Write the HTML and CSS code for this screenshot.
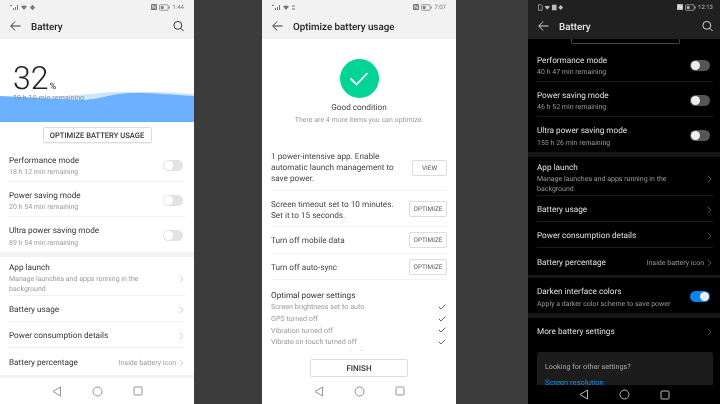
FILE: index.html
```html
<!DOCTYPE html>
<html lang="en">
<head>
    <meta charset="UTF-8">
    <title>Battery screens</title>
    <link rel="stylesheet" href="styles.css">
</head>
<body>
    <svg width="0" height="0" class="defs">
        <symbol id="back" viewBox="0 0 12 12"><path d="M11.500 6H1M5.500 1.200 .8 6l4.700 4.800" fill="none" stroke="currentColor" stroke-width="1"/></symbol>
        <symbol id="search" viewBox="0 0 12 12"><circle cx="5.300" cy="5.300" r="4.300" fill="none" stroke="currentColor" stroke-width="1"/><path d="M8.500 8.500 11.500 11.500" stroke="currentColor" stroke-width="1"/></symbol>
        <symbol id="chev" viewBox="0 0 5 8"><path d="M.7 .7 4 4 .7 7.300" fill="none" stroke="currentColor" stroke-width=".8"/></symbol>
        <symbol id="tick" viewBox="0 0 9 7"><path d="M.7 3.200 3.300 5.800 8.300 .8" fill="none" stroke="currentColor" stroke-width="1"/></symbol>
        <symbol id="nav-back" viewBox="0 0 10 11"><path d="M8.500 1v9L1 5.500z" fill="none" stroke="currentColor" stroke-width=".9"/></symbol>
        <symbol id="nav-home" viewBox="0 0 11 11"><circle cx="5.500" cy="5.500" r="4.500" fill="none" stroke="currentColor" stroke-width=".9"/></symbol>
        <symbol id="nav-recent" viewBox="0 0 10 10"><rect x="1" y="1" width="8" height="8" rx="1" fill="none" stroke="currentColor" stroke-width=".9"/></symbol>
        <symbol id="stat-a" viewBox="0 0 26 7"><path d="M0 1h2v1H0zM3 6h1V4H3zM5 6h1V3H5zM7 6h1V1H7z" fill="currentColor"/><path d="M11 2.500q3-2 6 0L14 6z" fill="currentColor"/><path d="M22.500 .8 25 3.500 22.500 6.200 20 3.500z" fill="currentColor"/></symbol>
        <symbol id="stat-b" viewBox="0 0 26 7"><path d="M0 1h2v1H0zM3 6h1V4H3zM5 6h1V3H5zM7 6h1V1H7z" fill="currentColor"/><path d="M11 2.500q3-2 6 0L14 6z" fill="currentColor"/><path d="M20 1.500h3v1h-3zM20 4.500h3v1h-3z" fill="currentColor"/></symbol>
        <symbol id="stat-c" viewBox="0 0 28 7"><path d="M.5 .5h3l1 1v5h-4z" fill="none" stroke="currentColor" stroke-width=".8"/><path d="M7 2.500q3-2 6 0L10 6z" fill="currentColor"/><rect x="15" y=".5" width="5" height="6" fill="currentColor"/><path d="M24.500 .8 27 3.500 24.500 6.200 22 3.500z" fill="currentColor"/></symbol>
        <symbol id="stat-n" viewBox="0 0 7 7"><rect width="7" height="7" rx="1" fill="currentColor"/><path d="M2 5.500v-4l3 4v-4" fill="none" stroke="#fff" stroke-width=".8"/></symbol>
        <symbol id="batt" viewBox="0 0 12 7"><rect x=".5" y=".5" width="9.500" height="6" rx="1" fill="none" stroke="currentColor" stroke-width=".8"/><rect x="2" y="2" width="3" height="3" fill="currentColor"/><rect x="10.500" y="2.500" width="1.200" height="2" fill="currentColor"/></symbol>
    </svg>

    <div class="phone">
        <div class="appbar">
            <div class="status">
                <svg class="stat-l"><use href="#stat-a"/></svg>
                <span class="spacer"></span>
                <svg class="stat-n"><use href="#stat-n"/></svg>
                <svg class="stat-b"><use href="#batt"/></svg>
                <span>1:44</span>
            </div>
            <div class="toolbar">
                <svg class="ico-back"><use href="#back"/></svg>
                <span class="toolbar-title">Battery</span>
                <svg class="ico-search"><use href="#search"/></svg>
            </div>
        </div>
        <div class="hero">
            <svg class="wave" viewBox="0 0 194 30" preserveAspectRatio="none">
                <path d="M0 5C40 6 70 4 100 1S150 -1 194 2V30H0z" fill="#cfe5ff"/>
                <path d="M0 4C30 5 60 8 80 8S110 1 135 1 170 3 194 4V30H0z" fill="#6cb1ff"/>
            </svg>
            <div class="pct">32<small>%</small></div>
            <div class="pct-sub">19 h 10 min remaining</div>
        </div>
        <div class="btn-wrap"><span class="btn btn-wide">OPTIMIZE BATTERY USAGE</span></div>
        <div class="group">
            <div class="row row-mode"><div class="row-text"><div class="t">Performance mode</div><div class="s">18 h 12 min remaining</div></div><span class="switch"></span></div>
            <div class="row row-mode"><div class="row-text"><div class="t">Power saving mode</div><div class="s">20 h 54 min remaining</div></div><span class="switch"></span></div>
            <div class="row row-mode last"><div class="row-text"><div class="t">Ultra power saving mode</div><div class="s">89 h 54 min remaining</div></div><span class="switch"></span></div>
        </div>
        <div class="band"></div>
        <div class="group">
            <div class="row row-app"><div class="row-text"><div class="t">App launch</div><div class="s">Manage launches and apps running in the background</div></div><svg class="chev"><use href="#chev"/></svg></div>
            <div class="row row-link"><div class="t">Battery usage</div><svg class="chev"><use href="#chev"/></svg></div>
            <div class="row row-link"><div class="t">Power consumption details</div><svg class="chev"><use href="#chev"/></svg></div>
            <div class="row row-link last"><div class="t">Battery percentage</div><span class="val">Inside battery icon</span><svg class="chev"><use href="#chev"/></svg></div>
        </div>
        <div class="band thin"></div>
        <div class="navbar">
            <svg class="nav-a"><use href="#nav-back"/></svg>
            <svg class="nav-b"><use href="#nav-home"/></svg>
            <svg class="nav-c"><use href="#nav-recent"/></svg>
        </div>
    </div>

    <div class="phone middle">
        <div class="appbar">
            <div class="status">
                <svg class="stat-l"><use href="#stat-b"/></svg>
                <span class="spacer"></span>
                <svg class="stat-n"><use href="#stat-n"/></svg>
                <svg class="stat-b"><use href="#batt"/></svg>
                <span>7:07</span>
            </div>
            <div class="toolbar">
                <svg class="ico-back"><use href="#back"/></svg>
                <span class="toolbar-title">Optimize battery usage</span>
            </div>
        </div>
        <div class="good">
            <div class="good-circle"><svg viewBox="0 0 20 16"><path d="M1.500 7.500 7.500 13.500 18.500 2" fill="none" stroke="#fff" stroke-width="1.800"/></svg></div>
            <div class="good-t">Good condition</div>
            <div class="good-s">There are 4 more items you can optimize.</div>
        </div>
        <div class="group opt">
            <div class="opt-row tall"><div class="opt-text">1 power-intensive app. Enable automatic launch management to save power.</div><span class="btn btn-view">VIEW</span></div>
            <div class="opt-row mid"><div class="opt-text">Screen timeout set to 10 minutes. Set it to 15 seconds.</div><span class="btn btn-opt">OPTIMIZE</span></div>
            <div class="opt-row short"><div class="opt-text">Turn off mobile data</div><span class="btn btn-opt">OPTIMIZE</span></div>
            <div class="opt-row short"><div class="opt-text">Turn off auto-sync</div><span class="btn btn-opt">OPTIMIZE</span></div>
        </div>
        <div class="optimal">
            <div class="optimal-h">Optimal power settings</div>
            <div class="check"><span>Screen brightness set to auto</span><svg><use href="#tick"/></svg></div>
            <div class="check"><span>GPS turned off</span><svg><use href="#tick"/></svg></div>
            <div class="check"><span>Vibration turned off</span><svg><use href="#tick"/></svg></div>
            <div class="check"><span>Vibrate on touch turned off</span><svg><use href="#tick"/></svg></div>
            <div class="check"><span>Auto-rotate screen turned off</span><svg><use href="#tick"/></svg></div>
        </div>
        <div class="finish-wrap"><span class="btn btn-finish">FINISH</span></div>
        <div class="navbar">
            <svg class="nav-a"><use href="#nav-back"/></svg>
            <svg class="nav-b"><use href="#nav-home"/></svg>
            <svg class="nav-c"><use href="#nav-recent"/></svg>
        </div>
    </div>

    <div class="phone dark">
        <div class="appbar">
            <div class="status">
                <svg class="stat-l"><use href="#stat-c"/></svg>
                <span class="spacer"></span>
                <svg class="stat-n"><use href="#stat-n"/></svg>
                <svg class="stat-b"><use href="#batt"/></svg>
                <span>12:13</span>
            </div>
            <div class="toolbar">
                <svg class="ico-back"><use href="#back"/></svg>
                <span class="toolbar-title">Battery</span>
                <svg class="ico-search"><use href="#search"/></svg>
            </div>
        </div>
        <div class="btn-stub"></div>
        <div class="group">
            <div class="row row-mode"><div class="row-text"><div class="t">Performance mode</div><div class="s">40 h 47 min remaining</div></div><span class="switch"></span></div>
            <div class="row row-mode"><div class="row-text"><div class="t">Power saving mode</div><div class="s">46 h 52 min remaining</div></div><span class="switch"></span></div>
            <div class="row row-mode last"><div class="row-text"><div class="t">Ultra power saving mode</div><div class="s">155 h 26 min remaining</div></div><span class="switch"></span></div>
        </div>
        <div class="band"></div>
        <div class="group">
            <div class="row row-app"><div class="row-text"><div class="t">App launch</div><div class="s">Manage launches and apps running in the background</div></div><svg class="chev"><use href="#chev"/></svg></div>
            <div class="row row-link"><div class="t">Battery usage</div><svg class="chev"><use href="#chev"/></svg></div>
            <div class="row row-link"><div class="t">Power consumption details</div><svg class="chev"><use href="#chev"/></svg></div>
            <div class="row row-link last"><div class="t">Battery percentage</div><span class="val">Inside battery icon</span><svg class="chev"><use href="#chev"/></svg></div>
        </div>
        <div class="band thin"></div>
        <div class="group">
            <div class="row row-mode last"><div class="row-text"><div class="t">Darken interface colors</div><div class="s">Apply a darker color scheme to save power</div></div><span class="switch on"></span></div>
        </div>
        <div class="band"></div>
        <div class="group">
            <div class="row row-more last"><div class="t">More battery settings</div><svg class="chev"><use href="#chev"/></svg></div>
        </div>
        <div class="other">
            <div class="other-q">Looking for other settings?</div>
            <div class="other-l">Screen resolution</div>
        </div>
        <div class="navbar">
            <svg class="nav-a"><use href="#nav-back"/></svg>
            <svg class="nav-b"><use href="#nav-home"/></svg>
            <svg class="nav-c"><use href="#nav-recent"/></svg>
        </div>
    </div>
</body>
</html>
```

FILE: styles.css
```css
* {
    box-sizing: border-box;
}

html, body {
    height: 404px;
    overflow: hidden;
}

body {
    margin: 0;
    background-color: #3c3c3c;
    font-family: 'Roboto', 'Liberation Sans', sans-serif;
    text-rendering: geometricPrecision;
    display: flex;
}

.defs {
    position: absolute;
}

svg {
    display: block;
    flex: none;
}

.phone {
    width: 194px;
    height: 404px;
    flex: none;
    background-color: #fff;
    color: #222;
    display: flex;
    flex-direction: column;
    overflow: hidden;
    position: relative;
    filter: blur(.3px);
}

.phone.middle {
    margin-left: 68px;
}

.phone.dark {
    width: 192px;
    margin-left: 72px;
    background-color: #000;
    color: #e6e6e6;
}

/* top bar */
.appbar {
    height: 39px;
    flex: none;
    background-color: #f2f2f2;
    padding: 4px 10px 0 10px;
}
.dark .appbar {
    background-color: #202020;
    padding: 4px 7px 0 10px;
}

.status {
    height: 6px;
    display: flex;
    align-items: center;
    gap: 2px;
    font-size: 6px;
    color: #777;
}
.dark .status {
    color: #bbb;
}
.spacer {
    flex: 1;
}
.stat-l { width: 26px; height: 7px; }
.stat-n { width: 6px; height: 6px; }
.stat-b { width: 11px; height: 7px; }

.toolbar {
    display: flex;
    align-items: center;
    margin-top: 9px;
    height: 14px;
}
.ico-back {
    width: 11px;
    height: 12px;
}
.toolbar-title {
    margin-left: 10px;
    padding-top: 2px;
    font-size: 9.800px;
    font-weight: 500;
    flex: 1;
}
.ico-search {
    width: 11px;
    height: 12px;
}

/* hero */
.hero {
    height: 83px;
    flex: none;
    padding: 24px 0 0 13px;
    position: relative;
}
.wave {
    position: absolute;
    left: 0;
    bottom: 0;
    width: 100%;
    height: 30px;
}
.pct {
    position: relative;
    font-size: 32px;
    font-weight: 300;
    line-height: 30px;
    color: #222;
}
.pct small {
    font-size: 9px;
    font-weight: 400;
    line-height: 0;
    margin-left: 1px;
}
.pct-sub {
    position: relative;
    font-size: 7.200px;
    color: #7f8fa3;
    line-height: 9px;
}

/* buttons */
.btn {
    display: flex;
    align-items: center;
    justify-content: center;
    background-color: #fff;
    border: 1px solid #ddd;
    border-radius: 2px;
    font-weight: 500;
    color: #333;
}
.btn-wrap {
    height: 25px;
    flex: none;
    display: flex;
    justify-content: center;
    padding-top: 5px;
}
.btn-wide {
    width: 109px;
    height: 16px;
    font-size: 7.600px;
    box-shadow: 0 1px 1px rgba(0,0,0,.06);
}

/* rows */
.group {
    padding: 0 9px;
    flex: none;
}
.dark .group {
    padding: 0 7px 0 9px;
}
.row {
    display: flex;
    align-items: center;
    border-bottom: 1px solid #f0f0f0;
}
.dark .row {
    border-bottom-color: #1c1c1c;
}
.row.last {
    border-bottom: none;
}
.row-text {
    flex: 1;
    min-width: 0;
}
.row-mode {
    height: 35px;
    padding-top: 5px;
}
.row-app {
    height: 39px;
    padding-top: 5px;
}
.row-link {
    height: 26px;
    padding-top: 3px;
}
.row-link.last {
    height: 27px;
}
.row-more {
    height: 26px;
    padding-top: 2px;
    margin-bottom: 8px;
}
.t {
    font-size: 8.200px;
    line-height: 11px;
    color: #333;
    flex: 1;
}
.dark .t {
    color: #e2e2e2;
}
.s {
    font-size: 7px;
    line-height: 9.500px;
    color: #999;
    margin-top: 1.500px;
}
.row-app .s {
    padding-right: 30px;
}
.val {
    font-size: 7px;
    color: #999;
    margin-right: 3px;
}
.chev {
    width: 5px;
    height: 8px;
    color: #c4c4c4;
    margin-right: 1px;
}
.dark .chev {
    color: #666;
}

.switch {
    width: 20px;
    height: 11px;
    border-radius: 6px;
    background-color: #e3e3e3;
    position: relative;
    flex: none;
    margin-top: -3px;
    margin-right: 2px;
}
.switch::after {
    content: "";
    position: absolute;
    left: 1px;
    top: 1px;
    width: 9px;
    height: 9px;
    border-radius: 50%;
    background-color: #fff;
}
.dark .switch {
    background-color: #555;
    margin-right: 3px;
}
.dark .switch::after {
    background-color: #eee;
}
.dark .switch.on {
    background-color: #0a84e8;
}
.switch.on::after {
    left: 10px;
}

.band {
    height: 5px;
    background-color: #f3f3f3;
    flex: none;
}
.band.thin {
    height: 3px;
}
.dark .band {
    background-color: #161616;
}

/* middle screen */
.good {
    height: 96px;
    flex: none;
    display: flex;
    flex-direction: column;
    align-items: center;
    padding-top: 20px;
}
.good-circle {
    width: 39px;
    height: 39px;
    border-radius: 50%;
    background-color: #02d495;
    display: flex;
    align-items: center;
    justify-content: center;
}
.good-circle svg {
    width: 20px;
    height: 16px;
}
.good-t {
    font-size: 8.200px;
    line-height: 11px;
    margin-top: 5px;
    color: #444;
}
.good-s {
    font-size: 7px;
    line-height: 9px;
    margin-top: 2px;
    color: #999;
}
.opt-row {
    display: flex;
    align-items: center;
    justify-content: space-between;
    border-bottom: 1px solid #f3f3f3;
}
.opt-row.tall {
    height: 56px;
    padding-top: 11px;
}
.opt-row.mid { height: 36px; }
.opt-row.short { height: 27px; }
.opt-row.short:last-child { height: 26px; }
.opt-text {
    font-size: 8.200px;
    line-height: 11px;
    color: #444;
    width: 128px;
}
.mid .opt-text {
    margin-top: 5px;
}
.short .opt-text {
    width: auto;
    margin-top: 3px;
}
.btn-view {
    width: 35px;
    height: 16px;
    font-size: 6.400px;
    font-weight: 400;
    color: #555;
}
.btn-opt {
    width: 38px;
    height: 16px;
    font-size: 6.400px;
    font-weight: 400;
    color: #555;
}
.optimal {
    padding: 11px 10px 0 9px;
    height: 71px;
    flex: none;
    overflow: hidden;
}
.optimal-h {
    font-size: 8.200px;
    line-height: 10px;
    color: #333;
}
.check {
    height: 11.700px;
    display: flex;
    align-items: center;
    justify-content: space-between;
    font-size: 7.200px;
    color: #999;
}
.check svg {
    width: 8px;
    height: 6px;
    color: #444;
}
.finish-wrap {
    height: 26px;
    flex: none;
    display: flex;
    justify-content: center;
    padding-top: 8px;
}
.btn-finish {
    width: 98px;
    height: 18px;
    font-size: 8px;
}

/* dark screen */
.btn-stub {
    height: 5px;
    width: 109px;
    margin: 0 0 3px 43px;
    border: 1px solid #444;
    border-top: none;
    border-radius: 0 0 2px 2px;
    flex: none;
}
.other {
    margin: 0 7px 0 9px;
    background-color: #1c1c1c;
    border-radius: 3px;
    padding: 10px 8px;
    height: 52px;
    flex: none;
}
.other-q {
    font-size: 7.200px;
    color: #aaa;
    line-height: 9px;
}
.other-l {
    font-size: 7.600px;
    line-height: 10px;
    color: #1b8ed8;
    margin-top: 7px;
}

/* nav */
.navbar {
    position: absolute;
    left: 0;
    right: 0;
    bottom: 0;
    height: 26px;
    background-color: #fff;
    display: flex;
    align-items: center;
    justify-content: center;
    gap: 30px;
    color: #888;
}
.dark .navbar {
    height: 19px;
    background-color: #000;
    color: #ccc;
}
.nav-a { width: 10px; height: 11px; }
.nav-b { width: 11px; height: 11px; }
.nav-c { width: 10px; height: 10px; }
```
